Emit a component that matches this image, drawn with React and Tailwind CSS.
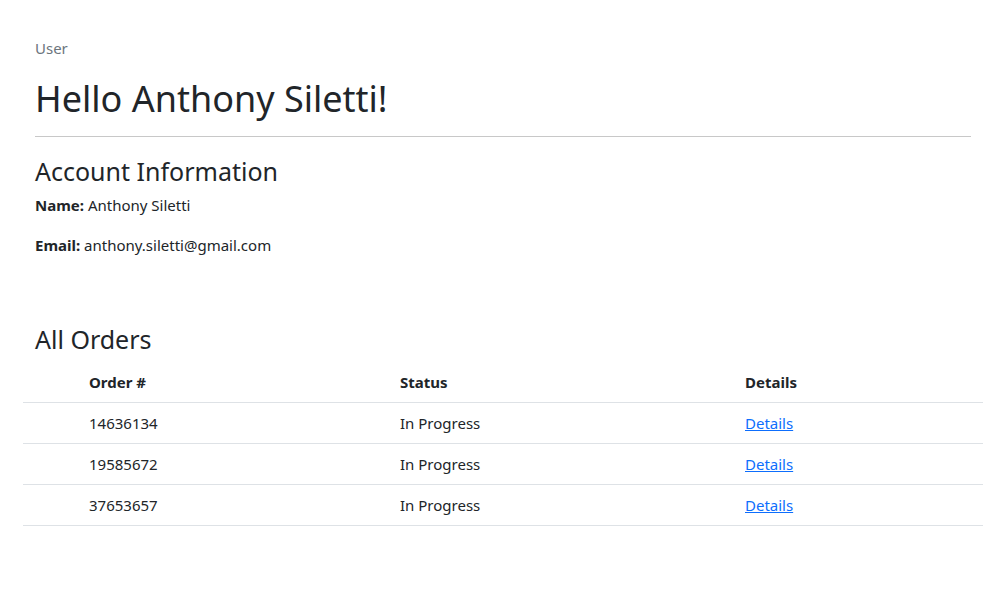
const orders = [
  { id: '14636134', status: 'In Progress' },
  { id: '19585672', status: 'In Progress' },
  { id: '37653657', status: 'In Progress' },
];

const App = () => {
  return (
    <div className="min-h-[615px] bg-white text-[#212529] font-['Noto_Sans',sans-serif]">
      <div className="px-[23px] pt-[37px]">
        <div className="px-3">
          <div className="text-[15px] leading-[22px] text-[#6c757d]">User</div>
          <h1 className="mt-[17px] text-[36px] leading-[46px]">Hello Anthony Siletti!</h1>
          <hr className="mt-[14px] border-t border-[#c8c8c8]" />
          <h3 className="mt-[17px] text-[25px] leading-[34px]">Account Information</h3>
          <p className="mt-[5px] text-[15px] leading-[24px]">
            <span className="font-bold">Name:</span> Anthony Siletti
          </p>
          <p className="mt-[16px] text-[15px] leading-[24px]">
            <span className="font-bold">Email:</span> anthony.siletti@gmail.com
          </p>
          <h3 className="mt-[65px] text-[25px] leading-[34px]">All Orders</h3>
        </div>
        <div className="mt-[7px] text-[15px]">
          <div className="flex h-[40px] items-center border-b border-[#dee2e6] font-bold">
            <div className="w-[66px]" />
            <div className="w-[311px]">Order #</div>
            <div className="w-[345px]">Status</div>
            <div className="flex-1">Details</div>
          </div>
          {orders.map((o) => (
            <div key={o.id} className="flex h-[41px] items-center border-b border-[#dee2e6]">
              <div className="w-[66px]" />
              <div className="w-[311px]">{o.id}</div>
              <div className="w-[345px]">{o.status}</div>
              <div className="flex-1">
                <a href="#" className="text-[#0d6efd] underline">Details</a>
              </div>
            </div>
          ))}
        </div>
      </div>
    </div>
  );
};

export default App;
